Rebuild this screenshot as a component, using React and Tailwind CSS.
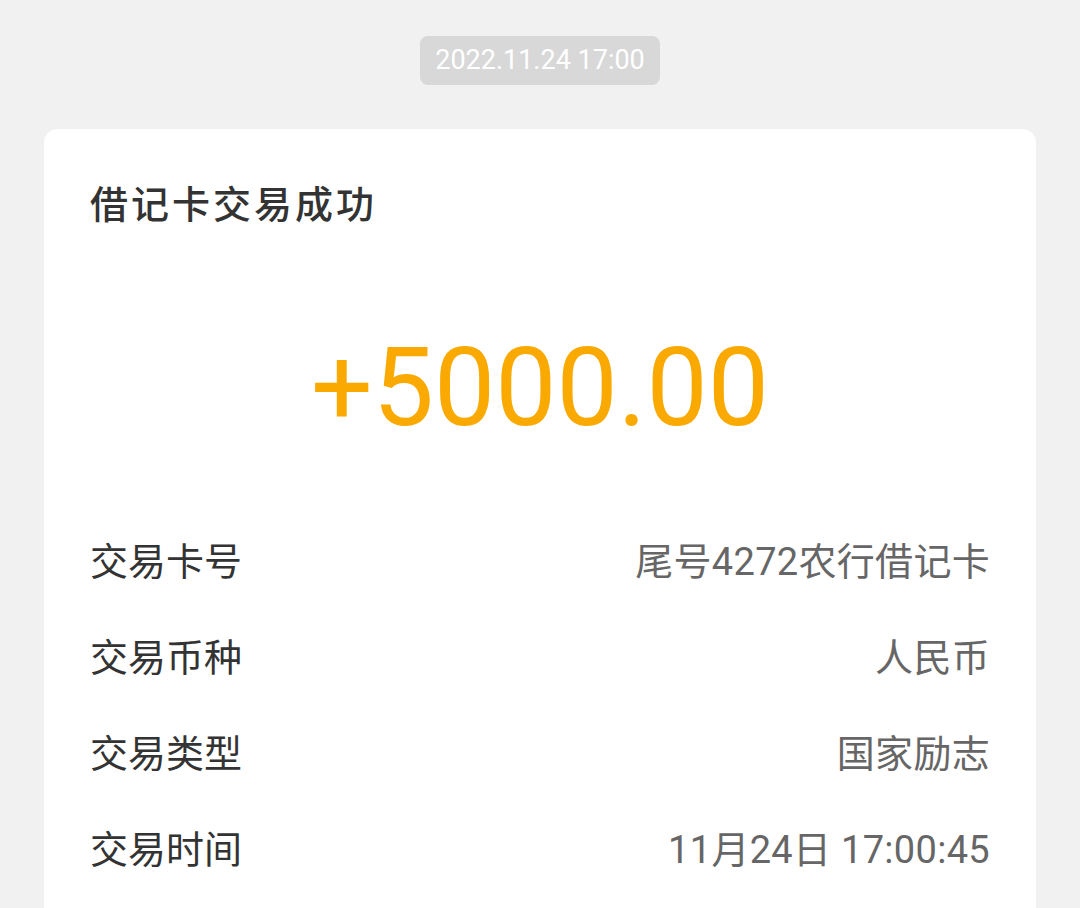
const rows = [
  { label: "交易卡号", value: "尾号4272农行借记卡" },
  { label: "交易币种", value: "人民币" },
  { label: "交易类型", value: "国家励志" },
  { label: "交易时间", value: "11月24日 17:00:45" },
];

export default function App() {
  return (
    <div
      className="h-[908px] w-[1080px] overflow-hidden bg-[#f1f1f1]"
      style={{ fontFamily: '"Roboto", "Noto Sans CJK SC", sans-serif' }}
    >
      <div className="flex justify-center pt-[36px]">
        <div className="flex h-[49px] items-center rounded-[8px] bg-[#d8d8d8] px-[15px] text-[27px] text-white">
          2022.11.24 17:00
        </div>
      </div>

      <div className="mx-[44px] mt-[44px] rounded-[14px] bg-white px-[46px] pt-[48px] pb-[40px]">
        <h5 className="text-[38px] font-medium leading-[56px] tracking-[3px] text-[#333333]">
          借记卡交易成功
        </h5>
        <div className="mt-[95px] text-center text-[109px] leading-[120px] text-[#f9a900]">
          +5000.00
        </div>
        <div className="mt-[66px]">
          {rows.map((row) => (
            <div
              key={row.label}
              className="flex h-[96px] items-center justify-between text-[38px]"
            >
              <span className="text-[#333333]">{row.label}</span>
              <span className="tracking-[0.3px] text-[#666666]">{row.value}</span>
            </div>
          ))}
        </div>
      </div>
    </div>
  );
}
